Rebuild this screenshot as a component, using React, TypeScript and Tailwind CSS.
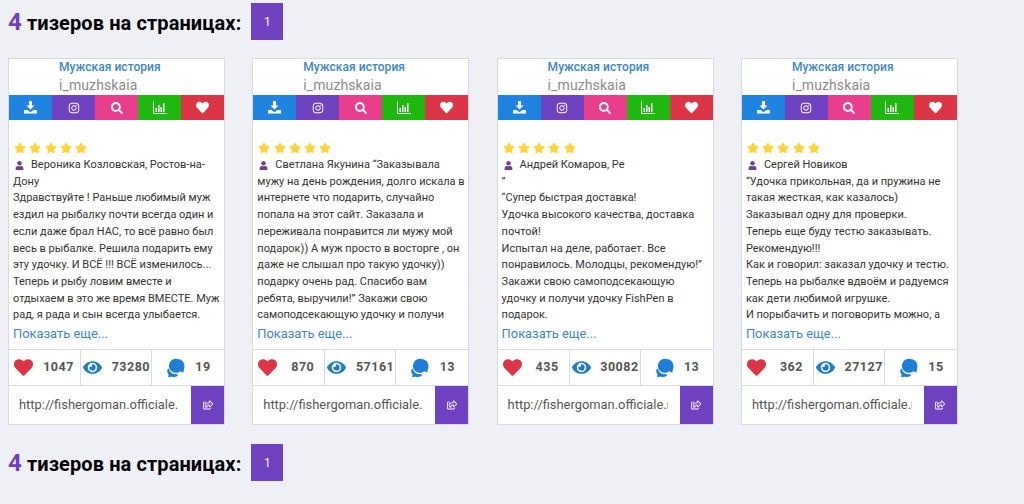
import React from "react";
import { FaInstagram, FaHeart, FaEye, FaUser, FaStar, FaSearch, FaRegShareSquare } from "react-icons/fa";

const cards = [
  { name: "Вероника Козловская, Ростов-на-", lines: ["Дону", "Здравствуйте ! Раньше любимый муж", "ездил на рыбалку почти всегда один и", "если даже брал НАС, то всё равно был", "весь в рыбалке. Решила подарить ему", "эту удочку. И ВСЁ !!! ВСЁ изменилось...", "Теперь и рыбу ловим вместе и", "отдыхаем в это же время ВМЕСТЕ. Муж", "рад, я рада и сын всегда улыбается."], s: ["1047", "73280", "19"] },
  { name: "Светлана Якунина “Заказывала", lines: ["мужу на день рождения, долго искала в", "интернете что подарить, случайно", "попала на этот сайт. Заказала и", "переживала понравится ли мужу мой", "подарок)) А муж просто в восторге , он", "даже не слышал про такую удочку))", "подарку очень рад. Спасибо вам", "ребята, выручили!” Закажи свою", "самоподсекающую удочку и получи"], s: ["870", "57161", "13"] },
  { name: "Андрей Комаров, Ре", lines: ["”", "“Супер быстрая доставка!", "Удочка высокого качества, доставка", "почтой!", "Испытал на деле, работает. Все", "понравилось. Молодцы, рекомендую!”", "Закажи свою самоподсекающую", "удочку и получи удочку FishPen в", "подарок."], s: ["435", "30082", "13"] },
  { name: "Сергей Новиков", lines: ["“Удочка прикольная, да и пружина не", "такая жесткая, как казалось)", "Заказывал одну для проверки.", "Теперь еще буду тестю заказывать.", "Рекомендую!!!", "Как и говорил: заказал удочку и тестю.", "Теперь на рыбалке вдвоём и радуемся", "как дети любимой игрушке.", "И порыбачить и поговорить можно, а"], s: ["362", "27127", "15"] },
];

function Heading() {
  return (
    <div className="flex items-center h-[37px] pl-2">
      <h2 className="text-[20px] leading-none font-bold text-black tracking-[.1px]">
        <span className="text-[#6f42c1] text-[24px]">4</span> тизеров на страницах:
      </h2>
      <div className="ml-[10px] w-8 h-[37px] bg-[#6f42c1] text-white text-[12px] flex items-center justify-center">1</div>
    </div>
  );
}

function Comments() {
  return (
    <svg width="20" height="20" viewBox="0 0 20 20" fill="#1f7fd6">
      <path d="M11.5 1a7 7 0 0 1 7 7c0 2.600-1.200 4.500-1 6.500-1.500-.2-2.500-.8-3.200-1.200A7 7 0 1 1 11.500 1z" />
      <path d="M3 10.500a6 6 0 0 0 7 5.600c.8.400 1.600.6 2.400.7-1 1.400-2.600 2.200-4.400 2.200-1 0-1.800-.2-2.600-.6-.9.500-2 .8-3.400.6.500-1 .6-1.800.4-2.700C1.400 15 1 13.500 1.300 12c.4-.7 1-1.200 1.700-1.500z" />
    </svg>
  );
}

function DownloadTray() {
  return (
    <svg width="13" height="13" viewBox="0 0 13 13" fill="currentColor">
      <path d="M5 0h3v4.500h2.500L6.500 8.500 2.500 4.500H5z" />
      <path d="M0 9h3.500l3 2.200 3-2.200H13v3.500H0z" />
    </svg>
  );
}

function Bars() {
  return (
    <svg width="14" height="13" viewBox="0 0 14 13" fill="currentColor">
      <path d="M0 0h1v12h13v1H0z" />
      <path d="M2.500 7h1.500v4H2.500zM5 4h1.500v7H5zM7.500 6h1.500v5H7.500zM10 2h1.500v9H10z" />
    </svg>
  );
}

function Card({ c }: { c: (typeof cards)[number] }) {
  return (
    <div className="w-[217px] h-[367px] shrink-0 bg-white border border-[#d9dbe2] flex flex-col">
      <div className="h-[36px] pl-[50px] pt-[1px] text-[12px] leading-[15px]">
        <div className="text-[#3b87c8] font-medium tracking-[.05px]">Мужская история</div>
        <div className="text-[#8b8b8b] text-[14px] leading-[21px] tracking-[.1px]">i_muzhskaia</div>
      </div>
      <div className="grid grid-cols-5 h-[25px] text-white">
        <div className="bg-[#1f84e0] flex items-center justify-center"><DownloadTray /></div>
        <div className="bg-[#6f42c1] flex items-center justify-center"><FaInstagram size={12} /></div>
        <div className="bg-[#e83e8c] flex items-center justify-center"><FaSearch size={12} /></div>
        <div className="bg-[#1fb80f] flex items-center justify-center"><Bars /></div>
        <div className="bg-[#dc3545] flex items-center justify-center"><FaHeart size={13} /></div>
      </div>
      <div className="flex-1 overflow-hidden pl-[4px] pr-[5px] pt-[20px] text-[11px] leading-[16.700px] text-[#333]">
        <div className="flex pl-[1px] h-[15px] items-center mb-[2px] text-[#ffd43b]">
          {[0, 1, 2, 3, 4].map((i) => <FaStar key={i} size={12} className="mr-[3.300px]" />)}
        </div>
        <div className="whitespace-nowrap pl-[2px] flex items-center h-[16.700px]">
          <FaUser size={9} className="text-[#6b3f92] mr-[7px]" />{c.name}
        </div>
        {c.lines.map((l, i) => <div key={i} className="whitespace-nowrap">{l}</div>)}
        <div className="text-[#3b87c8] text-[12.900px] leading-[20px]">Показать еще...</div>
      </div>
      <div className="grid grid-cols-[72px_71px_1fr] h-[36px] border-t border-[#dcdcdc] text-[#555] text-[12.500px] font-bold tracking-[.5px]">
        <div className="flex items-center pl-[5px] border-r border-[#dcdcdc]"><FaHeart size={19} className="text-[#dc3545]" /><span className="flex-1 text-center pl-[4px]">{c.s[0]}</span></div>
        <div className="flex items-center justify-between pl-[2px] pr-[1px] border-r border-[#dcdcdc]"><FaEye size={19} className="text-[#1f7fc6]" />{c.s[1]}</div>
        <div className="flex items-center pl-[14px]"><Comments /><span className="flex-1 text-center pr-[4px]">{c.s[2]}</span></div>
      </div>
      <div className="flex h-[39px] border-t border-[#dcdcdc]">
        <div className="w-[182px] pl-[10px] pr-[12px] flex items-center text-[#555] text-[12.900px]">
          <div className="overflow-hidden whitespace-nowrap">http://fishergoman.officiale.ru</div>
        </div>
        <div className="flex-1 bg-[#6f42c1] flex items-center justify-center text-white"><FaRegShareSquare size={10} /></div>
      </div>
    </div>
  );
}

export default function App() {
  return (
    <div className="w-[1024px] h-[504px] overflow-hidden bg-[#eff0f6] font-['Roboto',sans-serif] pt-[3px]">
      <Heading />
      <div className="flex gap-[27.300px] pl-2 mt-[18px] mb-[19px]">
        {cards.map((c, i) => <Card key={i} c={c} />)}
      </div>
      <Heading />
    </div>
  );
}
